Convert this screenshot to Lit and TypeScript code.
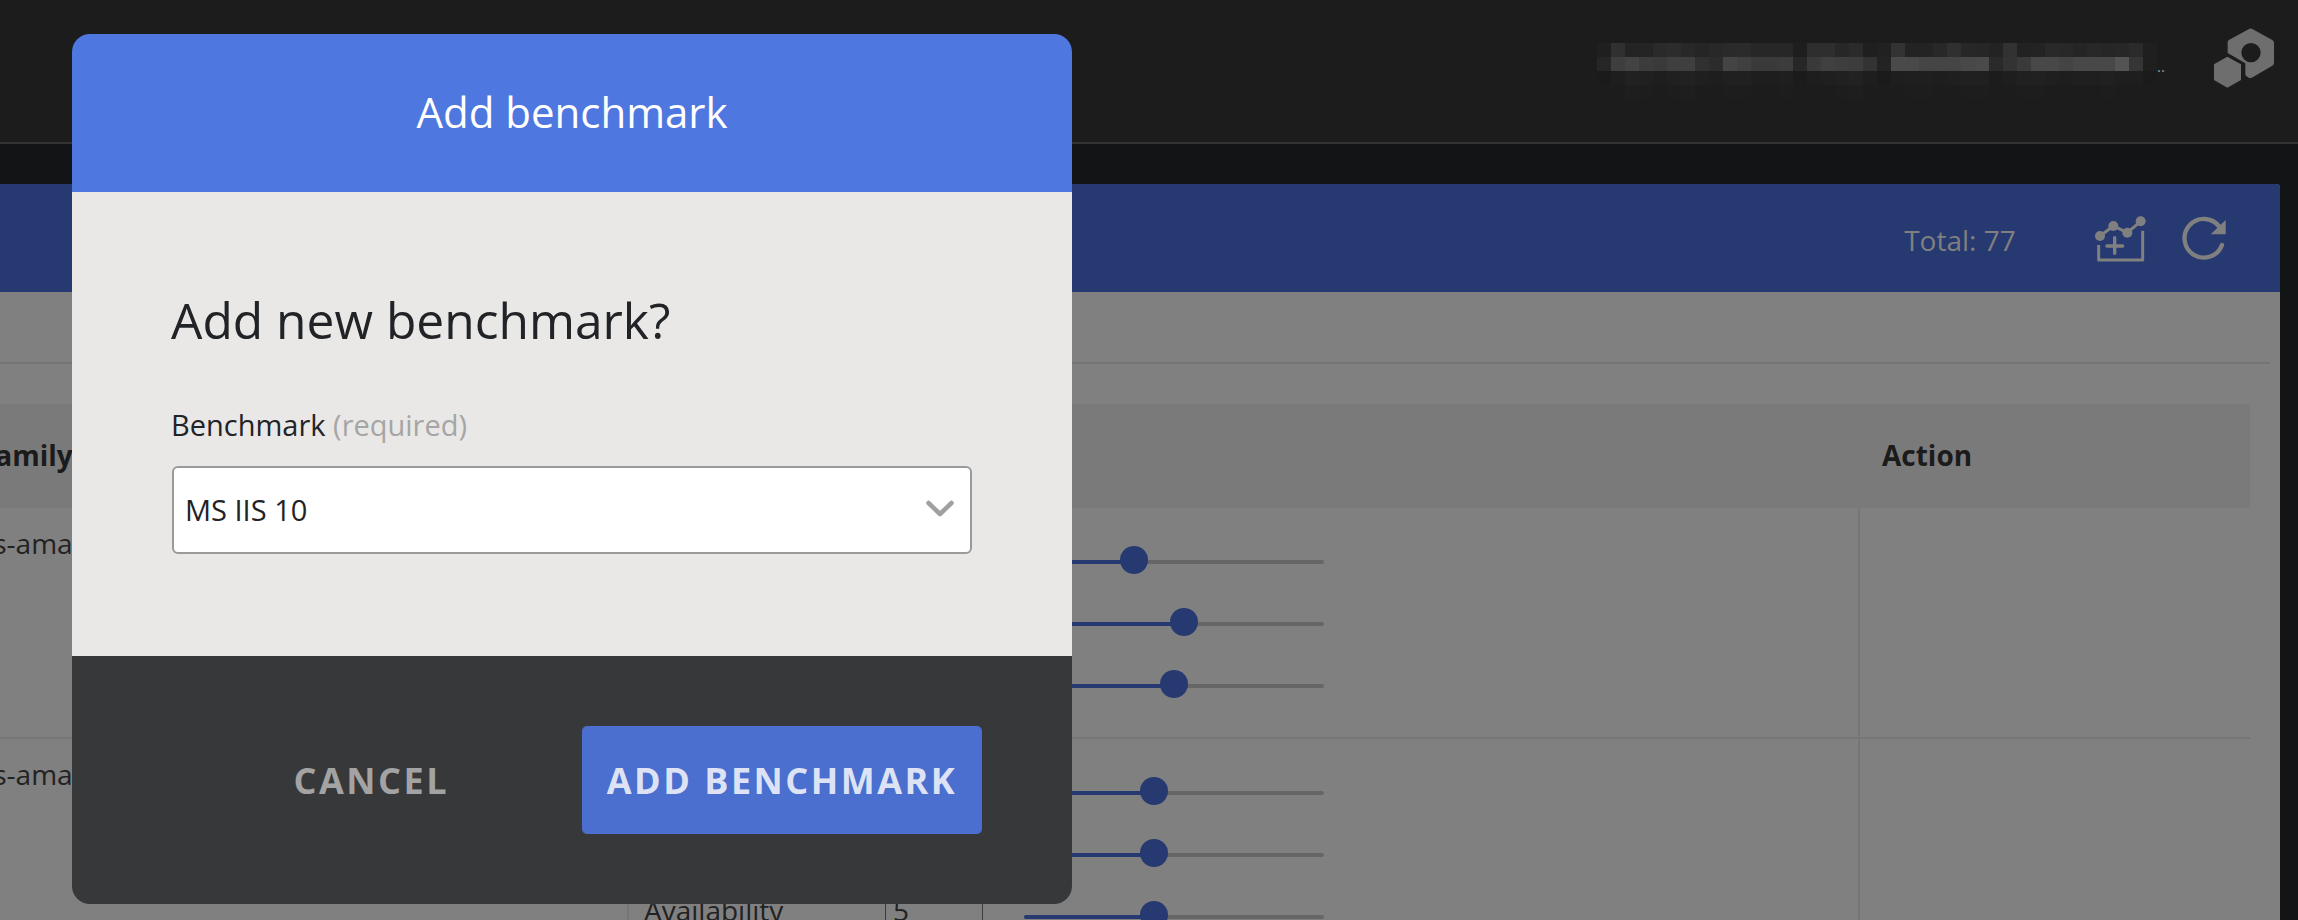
import { LitElement, html, css, svg } from "lit";
import { customElement } from "lit/decorators.js";

const ROW_A = "1f 30 24 24 2a 2c 28 25 28 2a 2b 27 27 27 1e 2e 2e 27 2a 1f 21 33 23 23 28 30 27 26 23 32 22 23 29 28 25 28 26 27 2a 1f".split(" ");
const ROW_B = "26 3e 43 3c 3a 3f 3f 30 2c 44 40 3a 3a 3c 27 3a 40 3e 3c 33 23 4a 49 45 45 45 48 4a 2a 33 3a 48 48 44 48 48 48 54 35 1f".split(" ");
const ROW_C = "1b 1e 21 20 1e 20 21 1f 1e 20 20 1e 1e 1f 1b 1e 1f 20 22 1e 1b 1e 1f 1f 1e 1f 20 20 1c 1e 20 21 1f 1e 1f 1f 20 1e 1e 1b".split(" ");
const ROW_D = "1c 1c 1e 1d 1c 1d 1e 1c 1c 1d 1d 1c 1c 1d 1c 1c 1c 1d 1e 1c 1c 1c 1d 1d 1c 1c 1d 1d 1c 1c 1d 1d 1c 1c 1c 1c 1d 1c 1c 1c".split(" ");

interface Metric { label: string; value: number; pct: number; }
interface Row { name: string; metrics: Metric[]; }

const ROWS: Row[] = [
  { name: "aws-amazon-linux-2", metrics: [
    { label: "Confidentiality", value: 4, pct: 36.67 },
    { label: "Integrity", value: 6, pct: 53.33 },
    { label: "Availability", value: 5, pct: 50 },
  ] },
  { name: "aws-amazon-linux", metrics: [
    { label: "Confidentiality", value: 5, pct: 43.33 },
    { label: "Integrity", value: 5, pct: 43.33 },
    { label: "Availability", value: 5, pct: 43.33 },
  ] },
];

@customElement("app-root")
export class AppRoot extends LitElement {
  static styles = css`
    :host {
      display: block;
      position: relative;
      width: 2298px;
      height: 920px;
      overflow: hidden;
      background: #131416;
      font-family: "Open Sans", "Noto Sans", sans-serif;
      color: #1e1e1e;
    }
    .nav {
      height: 142px;
      background: #1c1c1c;
      border-bottom: 2px solid #333333;
      display: flex;
      justify-content: flex-end;
      align-items: flex-start;
      padding: 0 23px 0 0;
    }
    .user {
      display: flex;
      align-items: flex-start;
      margin-top: 43px;
      margin-right: 49px;
    }
    .mosaic {
      display: grid;
      grid-template-columns: repeat(40, 14px);
      grid-auto-rows: 14px;
    }
    .dots {
      font-size: 15px;
      line-height: 14px;
      color: #9a9a9a;
      margin-top: 16px;
      width: 7px;
    }
    .logo {
      display: block;
      width: 62px;
      height: 62px;
      margin-top: 27px;
      flex: none;
    }
    .main {
      padding: 40px 18px 0 0;
    }
    .panel {
      margin-left: -44px;
      background: #808080;
      border-radius: 4px 4px 0 0;
      height: 736px;
    }
    .panel-head {
      height: 108px;
      background: #273971;
      border-radius: 4px 4px 0 0;
      display: flex;
      align-items: center;
      justify-content: flex-end;
      padding-right: 52px;
      box-sizing: border-box;
    }
    .total {
      font-size: 28px;
      line-height: 40px;
      color: #808080;
      margin-right: 78px;
      margin-top: 3px;
    }
    .add-icon {
      display: block;
      width: 53.33px;
      height: 48.33px;
      margin-right: 33px;
      margin-top: 2px;
    }
    .refresh-icon {
      display: block;
      width: 48px;
      height: 48px;
    }
    .tabs {
      height: 70px;
      margin-right: 10px;
      border-bottom: 2px solid #747474;
    }
    .table {
      margin-top: 40px;
      margin-right: 30px;
    }
    .thead {
      display: grid;
      grid-template-columns: 1902px 1fr;
      height: 104px;
      box-sizing: border-box;
      padding-bottom: 2px;
      align-items: center;
      background: #7a7a7a;
      font-size: 28px;
      line-height: 40px;
      font-weight: 700;
      color: #1b1b1b;
    }
    .thead .family {
      padding-left: 24px;
    }
    .thead .action {
      padding-left: 24px;
    }
    .row {
      display: grid;
      grid-template-columns: 671px 1233px 1fr;
      border-bottom: 2px solid #767676;
    }
    .name {
      font-size: 28px;
      line-height: 40px;
      padding-top: 15px;
      color: #222222;
      white-space: nowrap;
      overflow: hidden;
    }
    .metrics {
      border-left: 2px solid #767676;
      border-right: 2px solid #767676;
      padding: 23px 0 20px 15px;
    }
    .metric {
      display: grid;
      grid-template-columns: 241px 98px 341px;
      height: 62px;
      align-items: center;
    }
    .metric .label {
      align-self: start;
      margin-top: 4px;
      font-size: 28px;
      line-height: 40px;
      color: #222222;
    }
    .metric .value {
      align-self: start;
      height: 62px;
      box-sizing: border-box;
      border-left: 1px solid #3c3c3c;
      border-right: 1px solid #3c3c3c;
      padding-left: 7px;
      font-size: 28px;
      line-height: 48px;
      color: #222222;
    }
    .slider {
      position: relative;
      height: 4px;
      margin-left: 41px;
      border-radius: 2px;
      background: #666666;
    }
    .fill {
      height: 4px;
      border-radius: 2px;
      background: #273971;
    }
    .thumb {
      position: absolute;
      top: -14px;
      width: 28px;
      height: 28px;
      margin-left: -14px;
      border-radius: 50%;
      background: #273971;
    }
    .modal {
      position: absolute;
      left: 72px;
      top: 34px;
      width: 1000px;
      height: 870px;
      border-radius: 18px;
      overflow: hidden;
      display: flex;
      flex-direction: column;
    }
    .m-head {
      height: 158px;
      box-sizing: border-box;
      padding-bottom: 2px;
      background: #4f77e0;
      color: #ffffff;
      display: flex;
      align-items: center;
      justify-content: center;
      font-size: 42px;
      line-height: 56px;
    }
    .m-body {
      height: 464px;
      background: #e9e8e7;
      padding: 96px 100px 0;
      box-sizing: border-box;
    }
    .m-title {
      margin-left: -1px;
      font-size: 49.7px;
      line-height: 64px;
      color: #222326;
    }
    .m-label {
      margin-top: 53px;
      margin-left: -1px;
      font-size: 29px;
      line-height: 40px;
      color: #222326;
    }
    .m-label span {
      color: #a5a5a5;
    }
    .select {
      margin-top: 21px;
      height: 88px;
      box-sizing: border-box;
      background: #ffffff;
      border: 2px solid #9a9a9a;
      border-radius: 6px;
      padding: 0 15px 2px 11px;
      display: flex;
      align-items: center;
      justify-content: space-between;
      font-size: 29px;
      color: #222326;
    }
    .chev {
      display: block;
      width: 30px;
      height: 20px;
    }
    .m-foot {
      height: 248px;
      background: #37383a;
      display: flex;
      align-items: flex-start;
      justify-content: flex-end;
      padding: 70px 90px 0 0;
      box-sizing: border-box;
      font-size: 36px;
      font-weight: 700;
      letter-spacing: 2.5px;
    }
    .cancel {
      color: #a3a3a3;
      height: 108px;
      display: flex;
      align-items: center;
      margin-right: 133px;
    }
    .confirm {
      width: 400px;
      height: 108px;
      background: #4a6fcf;
      color: #dde3f5;
      border-radius: 5px;
      display: flex;
      align-items: center;
      justify-content: center;
    }
  `;

  private mosaicCell(v: string) {
    return html`<i style="background:#${v}${v}${v}"></i>`;
  }

  private metric(m: Metric) {
    return html`<div class="metric">
      <div class="label">${m.label}</div>
      <div class="value">${m.value}</div>
      <div class="slider">
        <div class="fill" style="width:${m.pct}%"></div>
        <div class="thumb" style="left:${m.pct}%"></div>
      </div>
    </div>`;
  }

  render() {
    return html`
      <div class="nav">
        <div class="user">
          <div class="mosaic">
            ${[...ROW_A, ...ROW_B, ...ROW_C, ...ROW_D].map((v) => this.mosaicCell(v))}
          </div>
          <div class="dots">..</div>
        </div>
        <svg class="logo" viewBox="99 51 186 186" aria-hidden="true">
          ${svg`<path fill="#6e6e6e" fill-rule="evenodd" d="M207 57 Q212 54 217 57 L277 90 Q282 93 282 99 L282 158 Q282 164 277 167 L218 202 Q212 206 206 203 L200 199 Q196 197 196 192 L196 160 L143 129 L143 96 Q143 91 148 89 Z M242 128 A29 29 0 1 0 184 128 A29 29 0 1 0 242 128 Z"/>
          <path fill="#6e6e6e" d="M142 140 L183 163 L183 210 L142 233 L102 210 L102 163 Z"/>`}
        </svg>
      </div>
      <div class="main">
        <div class="panel">
          <div class="panel-head">
            <div class="total">Total: 77</div>
            <svg class="add-icon" viewBox="100 75 160 145" fill="none" stroke="#808080" aria-hidden="true">
              ${svg`<path stroke-width="9" stroke-linecap="round" d="M118 138 L158 108 L200 128 L240 94"/>
              <circle cx="118" cy="138" r="15" fill="#808080" stroke="none"/>
              <circle cx="158" cy="108" r="15" fill="#808080" stroke="none"/>
              <circle cx="200" cy="128" r="15" fill="#808080" stroke="none"/>
              <circle cx="240" cy="94" r="15" fill="#808080" stroke="none"/>
              <path stroke-width="9" stroke-linejoin="round" d="M114 165 L114 210 L246 210 L246 122"/>
              <path stroke-width="10" stroke-linecap="round" d="M162 143 L162 190 M139 168 L186 168"/>`}
            </svg>
            <svg class="refresh-icon" viewBox="360 72 144 144" fill="none" aria-hidden="true">
              ${svg`<path stroke="#808080" stroke-width="13" stroke-linecap="round" d="M486 165 A58 58 0 1 1 478 110"/>
              <path fill="#808080" d="M497 90 L497 133 L452 133 Z"/>`}
            </svg>
          </div>
          <div class="tabs"></div>
          <div class="table">
            <div class="thead">
              <div class="family">Family</div>
              <div class="action">Action</div>
            </div>
            ${ROWS.map(
              (r) => html`<div class="row">
                <div class="name">${r.name}</div>
                <div class="metrics">${r.metrics.map((m) => this.metric(m))}</div>
                <div></div>
              </div>`
            )}
          </div>
        </div>
      </div>
      <div class="modal">
        <div class="m-head">Add benchmark</div>
        <div class="m-body">
          <div class="m-title">Add new benchmark?</div>
          <div class="m-label">Benchmark <span>(required)</span></div>
          <div class="select">
            <span>MS IIS 10</span>
            <svg class="chev" viewBox="0 0 30 20" fill="none" aria-hidden="true">
              ${svg`<path stroke="#a0a0a0" stroke-width="4.5" stroke-linecap="round" stroke-linejoin="round" d="M3.5 4 L15 15 L26.5 4"/>`}
            </svg>
          </div>
        </div>
        <div class="m-foot">
          <div class="cancel">CANCEL</div>
          <div class="confirm">ADD BENCHMARK</div>
        </div>
      </div>
    `;
  }
}
